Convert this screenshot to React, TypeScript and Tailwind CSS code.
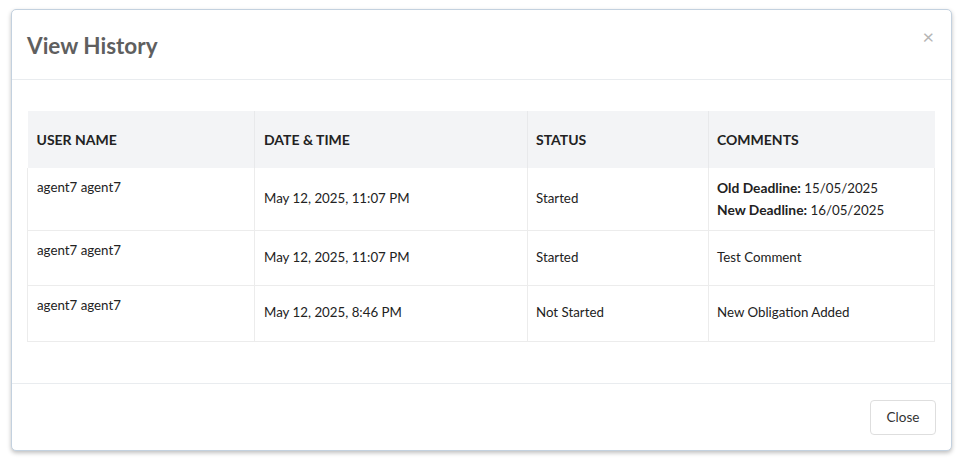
import React from "react";

const rows = [
  {
    user: "agent7 agent7",
    date: "May 12, 2025, 11:07 PM",
    status: "Started",
    comment: (
      <div className="leading-[22px]">
        <div>
          <span className="font-bold text-[13.8px]">Old Deadline:</span> 15/05/2025
        </div>
        <div>
          <span className="font-bold text-[13.8px]">New Deadline:</span> 16/05/2025
        </div>
      </div>
    ),
    h: "h-[62px]",
  },
  {
    user: "agent7 agent7",
    date: "May 12, 2025, 11:07 PM",
    status: "Started",
    comment: "Test Comment",
    h: "h-[55px]",
  },
  {
    user: "agent7 agent7",
    date: "May 12, 2025, 8:46 PM",
    status: "Not Started",
    comment: "New Obligation Added",
    h: "h-[56px]",
  },
];

export default function App() {
  return (
    <div
      className="w-[962px] h-[467px] bg-white pt-[9px] pl-[11px]"
      style={{ fontFamily: "Lato, 'Open Sans', sans-serif" }}
    >
      <div className="w-[941px] h-[442px] bg-white border border-[#c3d1df] rounded-[5px] shadow-[0_2px_4px_rgba(0,0,0,0.25)] flex flex-col">
        <div className="h-[70px] border-b border-[#e9ecef] flex items-start justify-between pl-[15px] pr-[16px]">
          <h1 className="text-[22.5px] font-bold text-[#5f5f5f] mt-[21px] leading-[30px]">
            View History
          </h1>
          <span className="text-[#b5b5b5] text-[20px] leading-none mt-[16px] mr-[1px]">×</span>
        </div>
        <div className="flex-1 px-[15px] pt-[31px]">
          <table className="w-[908px] border-collapse text-[13.3px] text-[#222]">
            <thead>
              <tr className="bg-[#f3f4f6] h-[57px] text-[14px]">
                <th className="w-[227px] text-left font-bold px-[9px] border-r border-[#e8e9eb]">USER NAME</th>
                <th className="w-[273px] text-left font-bold px-[9px] border-r border-[#e8e9eb]">DATE &amp; TIME</th>
                <th className="w-[181px] text-left font-bold px-[8px] border-r border-[#e8e9eb]">STATUS</th>
                <th className="text-left font-bold px-[8px]">COMMENTS</th>
              </tr>
            </thead>
            <tbody>
              {rows.map((r, i) => (
                <tr key={i} className={`${r.h} border-b border-[#ececec]`}>
                  <td className="align-top pt-[10px] px-[9px] border-l border-r border-[#ececec]">{r.user}</td>
                  <td className="align-middle px-[9px] border-r border-[#ececec]">{r.date}</td>
                  <td className="align-middle px-[8px] border-r border-[#ececec]">{r.status}</td>
                  <td className="align-middle px-[8px] border-r border-[#ececec]">{r.comment}</td>
                </tr>
              ))}
            </tbody>
          </table>
        </div>
        <div className="h-[67px] border-t border-[#e9ecef] flex justify-end items-start pr-[15px] pt-[16px]">
          <button className="h-[35px] w-[66px] border border-[#dedede] rounded-[4px] text-[13.5px] text-[#333] bg-white">
            Close
          </button>
        </div>
      </div>
    </div>
  );
}
